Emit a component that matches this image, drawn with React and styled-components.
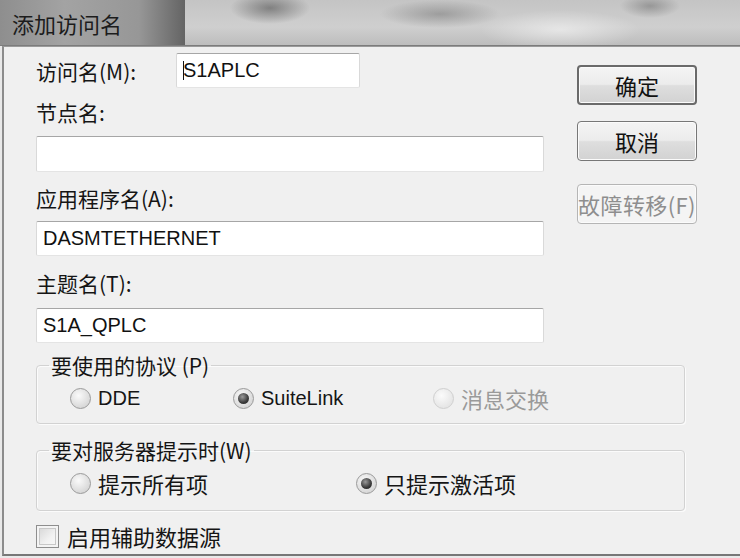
import React from "react";
import styled, {createGlobalStyle, css} from "styled-components";

const GlobalStyles = createGlobalStyle`
    html, body {
        margin: 0;
        padding: 0;
        background: #e9e9e9;
    }
    body {
        font-family: "Noto Sans CJK SC", "Liberation Sans", sans-serif;
        color: #111;
    }
`

const cjk = `"Noto Sans CJK SC", "Liberation Sans", sans-serif`;
const latin = `"Liberation Sans", "Noto Sans CJK SC", sans-serif`;

const Window = styled.div`
    width: 740px;
    height: 558px;
    display: flex;
    flex-direction: column;
    overflow: hidden;
`

const TitleBar = styled.div`
    height: 45px;
    display: flex;
    flex-shrink: 0;
    border-bottom: 1px solid #7c7c7c;
    background:
        radial-gradient(ellipse 40px 16px at 270px 8px, rgba(70,70,70,0.55), transparent),
        radial-gradient(ellipse 60px 14px at 440px 14px, rgba(90,90,90,0.4), transparent),
        radial-gradient(ellipse 30px 12px at 650px 6px, rgba(80,80,80,0.4), transparent),
        radial-gradient(ellipse 80px 20px at 560px 30px, rgba(255,255,255,0.5), transparent),
        linear-gradient(to bottom, #c4c4c4, #cfcfcf 60%, #bdbdbd);
`

const TitleCaption = styled.div`
    width: 185px;
    display: flex;
    align-items: center;
    padding-left: 12px;
    box-sizing: border-box;
    font-family: ${cjk};
    font-size: 22px;
    color: #1c1c1c;
    background: linear-gradient(to right, #8e8e8e, #a3a3a3 35%, #979797 75%, #646464);
`

const Body = styled.div`
    flex: 1;
    margin-left: 2px;
    border-left: 2px solid #8c8c8c;
    border-top: 1px solid #9a9a9a;
    border-bottom: 2px solid #777;
    background: #f0f0f0;
    padding-left: 32px;
    margin-bottom: 2px;
    display: flex;
    flex-direction: column;
`

const TopSection = styled.div`
    display: flex;
`

const Fields = styled.div`
    width: 508px;
    display: flex;
    flex-direction: column;
`

const InlineRow = styled.div`
    display: flex;
    align-items: center;
    margin-top: 6px;
`

const Label = styled.div`
    font-family: ${cjk};
    font-size: 21px;
    line-height: 24px;
    height: 24px;
    color: #151515;
    width: ${props => props.$width ? props.$width + 'px' : 'auto'};
    margin-top: ${props => (props.$top || 0) + 'px'};
`

const TextBox = styled.div`
    position: relative;
    box-sizing: border-box;
    width: ${props => props.$width ? props.$width + 'px' : '100%'};
    height: ${props => (props.$height || 35) + 'px'};
    margin-top: ${props => (props.$top || 0) + 'px'};
    background: #fff;
    border: 1px solid #d9d9d9;
    border-top-color: #a6a6a6;
    border-bottom-color: #e4e4e4;
    border-radius: 2px;
    padding-left: 6px;
    display: flex;
    align-items: center;
    font-family: ${latin};
    font-size: 20px;
    color: #111;

    ${props => props.$caret && css`
        &::before {
            content: "";
            position: absolute;
            left: 6px;
            top: 7px;
            bottom: 7px;
            width: 1px;
            background: #111;
        }
    `}
`

const Buttons = styled.div`
    margin-left: 33px;
    width: 120px;
    display: flex;
    flex-direction: column;
    padding-top: 18px;
`

const Button = styled.button`
    box-sizing: border-box;
    width: 120px;
    height: 40px;
    margin-top: ${props => (props.$top || 0) + 'px'};
    padding: 0;
    font-family: ${cjk};
    font-size: 22px;
    color: #111;
    border-radius: 4px;
    border: ${props => props.$default ? '2px solid #6a6a6a' : '1px solid #777'};
    box-shadow: inset 0 0 0 1px #fbfbfb;
    background: linear-gradient(to bottom, #f4f4f4 0%, #ececec 48%, #dedede 52%, #d2d2d2 100%);
    white-space: nowrap;

    &:disabled {
        color: #8e8e8e;
        border: 1px solid #b5b5b5;
        background: #f4f4f4;
        font-size: 22px;
        letter-spacing: 0.4px;
    }
`

const Group = styled.fieldset`
    width: 649px;
    box-sizing: border-box;
    margin: ${props => props.$top}px 0 0 0;
    padding: 6px 0 ${props => props.$bottom || 8}px 33px;
    border: 1px solid #d2d2d2;
    border-radius: 4px;
    box-shadow: inset 1px 1px 0 #fbfbfb, 1px 1px 0 #fbfbfb;
    display: flex;
    align-items: center;
`

const Legend = styled.legend`
    margin-left: -21px;
    padding: 0 2px;
    font-family: ${cjk};
    font-size: 21px;
    line-height: 24px;
    color: #151515;
`

const RadioItem = styled.label`
    display: flex;
    align-items: center;
    gap: 7px;
    height: 30px;
    width: ${props => props.$width ? props.$width + 'px' : 'auto'};
    font-family: ${props => props.$latin ? latin : cjk};
    font-size: ${props => props.$latin ? '20px' : '22px'};
    color: ${props => props.$disabled ? '#9a9a9a' : '#151515'};
`

const RadioDot = styled.span`
    position: relative;
    width: 21px;
    height: 21px;
    box-sizing: border-box;
    border-radius: 50%;
    border: 1px solid ${props => props.$disabled ? '#cfcfcf' : '#9a9a9a'};
    background: ${props => props.$disabled
        ? 'radial-gradient(circle at 40% 35%, #fbfbfb, #e6e6e6 70%)'
        : 'radial-gradient(circle at 40% 35%, #fafafa, #d9d9d9 70%, #c8c8c8)'};
    flex-shrink: 0;

    ${props => props.$checked && css`
        &::after {
            content: "";
            position: absolute;
            left: 4px;
            top: 4px;
            width: 11px;
            height: 11px;
            border-radius: 50%;
            background: radial-gradient(circle at 40% 35%, #9a9a9a, #3a3a3a 60%, #222);
        }
    `}
`

const CheckRow = styled.label`
    display: flex;
    align-items: center;
    gap: 8px;
    margin-top: 9px;
    font-family: ${cjk};
    font-size: 22px;
    color: #151515;
`

const CheckBox = styled.span`
    width: 23px;
    height: 23px;
    box-sizing: border-box;
    border: 1px solid #8e8e8e;
    background: linear-gradient(135deg, #d2d2d2, #f2f2f2 60%, #fafafa);
    box-shadow: inset 0 0 0 2px #f4f4f4, inset 0 0 0 3px #c8c8c8;
`

const Radio = ({label, checked, disabled, width, isLatin}) => (
    <RadioItem $width={width} $disabled={disabled} $latin={isLatin}>
        <RadioDot $checked={checked} $disabled={disabled} />
        {label}
    </RadioItem>
)

const App = () => {
    return (
        <Window>
            <GlobalStyles />
            <TitleBar>
                <TitleCaption>添加访问名</TitleCaption>
            </TitleBar>
            <Body>
                <TopSection>
                    <Fields>
                        <InlineRow>
                            <Label $width={140}>访问名(M):</Label>
                            <TextBox $width={184} $caret>S1APLC</TextBox>
                        </InlineRow>
                        <Label $top={12}>节点名:</Label>
                        <TextBox $top={12} $height={36}></TextBox>
                        <Label $top={14}>应用程序名(A):</Label>
                        <TextBox $top={11}>DASMTETHERNET</TextBox>
                        <Label $top={15}>主题名(T):</Label>
                        <TextBox $top={13}>S1A_QPLC</TextBox>
                    </Fields>
                    <Buttons>
                        <Button $default>确定</Button>
                        <Button $top={16}>取消</Button>
                        <Button $top={23} disabled>故障转移(F)</Button>
                    </Buttons>
                </TopSection>
                <Group $top={10} $bottom={10}>
                    <Legend>要使用的协议 (P)</Legend>
                    <Radio label="DDE" width={163} isLatin />
                    <Radio label="SuiteLink" width={200} checked isLatin />
                    <Radio label="消息交换" disabled />
                </Group>
                <Group $top={14} $bottom={12}>
                    <Legend>要对服务器提示时(W)</Legend>
                    <Radio label="提示所有项" width={286} />
                    <Radio label="只提示激活项" checked />
                </Group>
                <CheckRow>
                    <CheckBox />
                    启用辅助数据源
                </CheckRow>
            </Body>
        </Window>
    );
}

export default App;
